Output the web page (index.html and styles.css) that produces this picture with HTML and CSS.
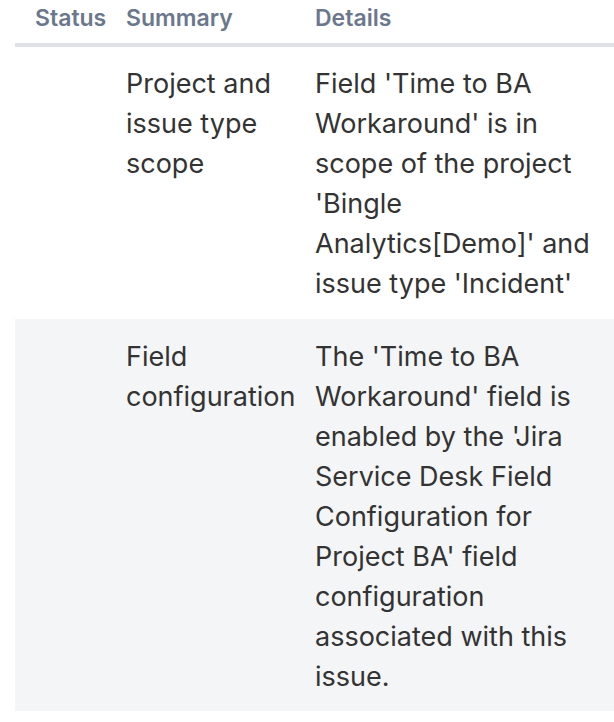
FILE: index.html
```html
<!DOCTYPE html>
<html>
<head>
<meta charset="utf-8">
<link rel="stylesheet" href="styles.css">
</head>
<body>
<div class="table">
  <div class="row head">
    <div class="cell">Status</div>
    <div class="cell">Summary</div>
    <div class="cell">Details</div>
  </div>
  <div class="row">
    <div class="cell"></div>
    <div class="cell">Project and issue type scope</div>
    <div class="cell">Field 'Time to BA Workaround' is in scope of the project 'Bingle Analytics[Demo]' and issue type 'Incident'</div>
  </div>
  <div class="row alt">
    <div class="cell"></div>
    <div class="cell">Field configuration</div>
    <div class="cell">The 'Time to BA Workaround' field is enabled by the 'Jira Service Desk Field Configuration for Project BA' field configuration associated with this issue.</div>
  </div>
</div>
</body>
</html>
```

FILE: styles.css
```css
html, body {
  margin: 0;
  padding: 0;
  background: #ffffff;
}
body {
  font-family: Inter, "Noto Sans", sans-serif;
  color: #333333;
  overflow: hidden;
}
.table {
  margin-left: 15px;
  width: 599px;
}
.row {
  display: grid;
  grid-template-columns: 111px 189px 299px;
  font-size: 27px;
  line-height: 40px;
  padding: 17px 0 14px;
}
.row .cell:first-child {
  padding-left: 20px;
}
.row .cell:last-child {
  padding-right: 9px;
}
.head {
  font-size: 23px;
  font-weight: 600;
  color: #6b778c;
  line-height: 24px;
  padding: 6px 0 13px;
  border-bottom: 4px solid #dfe1e6;
}
.alt {
  background: #f4f5f7;
  padding: 18px 0 14px;
  margin-top: 1px;
}
```
